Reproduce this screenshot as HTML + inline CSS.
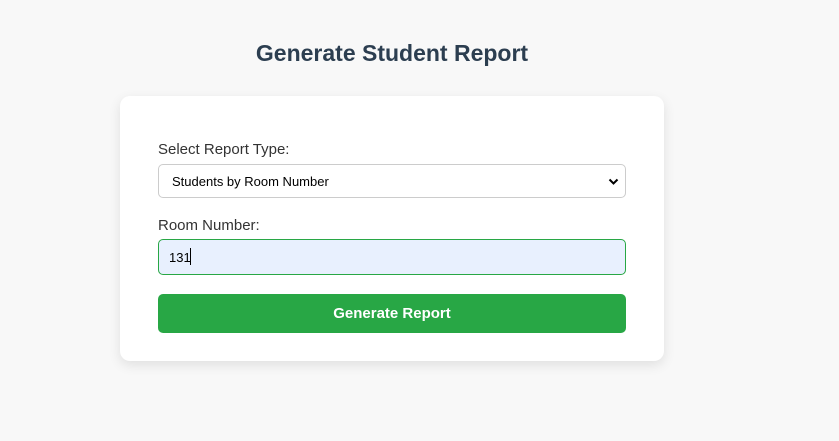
<!DOCTYPE html>
<html><head><style>
body{margin:0;width:839px;height:441px;background:#f8f8f8;font-family:"Liberation Sans",sans-serif;position:relative;overflow:hidden}
h1{position:absolute;top:40px;left:0;width:784px;text-align:center;margin:0;font-size:23px;font-weight:bold;color:#2c3e50}
.card{position:absolute;left:120px;top:96px;width:544px;height:265px;background:#fff;border-radius:10px;box-shadow:0 4px 12px rgba(0,0,0,0.1)}
.lbl{position:absolute;left:38px;font-size:15px;color:#333}
.sel{position:absolute;left:38px;top:68px;width:468px;height:34px;border:1px solid #ccc;border-radius:5px;font-size:13px;color:#000;box-sizing:border-box}
.sel span{position:absolute;left:13px;top:9px}
.sel svg{position:absolute;right:6px;top:13px}
.inp{position:absolute;left:38px;top:143px;width:468px;height:36px;border:1px solid #28a745;border-radius:5px;background:#e8f0fe;box-sizing:border-box;font-size:13px}
.inp span{position:absolute;left:10px;top:10px}
.inp i{position:absolute;left:31px;top:8px;width:1px;height:17px;background:#000}
.btn{position:absolute;left:38px;top:198px;width:468px;height:39px;background:#28a745;border-radius:5px;color:#fff;font-weight:bold;font-size:15px;text-align:center;line-height:39px}
</style></head><body>
<h1>Generate Student Report</h1>
<div class="card">
<div class="lbl" style="top:45px">Select Report Type:</div>
<div class="sel"><span>Students by Room Number</span><svg width="11" height="8" viewBox="0 0 11 8"><path d="M1.5 1.5L5.5 5.5L9.5 1.5" stroke="#000" stroke-width="2" fill="none"/></svg></div>
<div class="lbl" style="top:121px">Room Number:</div>
<div class="inp"><span>131</span><i></i></div>
<div class="btn">Generate Report</div>
</div>
</body></html>
